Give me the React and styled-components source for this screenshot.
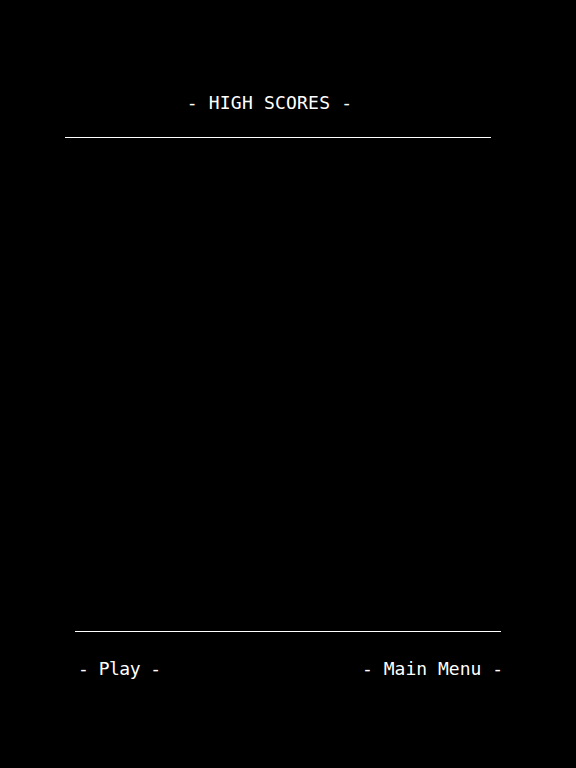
import styled, { createGlobalStyle } from 'styled-components';

const GlobalStyle = createGlobalStyle`
  html, body {
    margin: 0;
    background: #000;
  }
`;

const Screen = styled.main`
  width: 576px;
  height: 768px;
  background: #000;
  color: #fff;
  font-family: 'DejaVu Sans Mono', 'Liberation Mono', monospace;
  display: flex;
  flex-direction: column;
  padding-top: 91px;
  box-sizing: border-box;
`;

const Title = styled.h1`
  margin: 0;
  font-size: 18px;
  font-weight: normal;
  line-height: 24px;
  letter-spacing: 0.2px;
  text-align: center;
  padding-right: 37px;
`;

const Rule = styled.hr`
  border: 0;
  height: 1px;
  background: #fff;
  width: 426px;
  margin: ${(p) => p.$top}px 0 0 ${(p) => p.$left}px;
`;

const Board = styled.section`
  height: 493px;
`;

const Footer = styled.nav`
  display: flex;
  justify-content: space-between;
  margin: 25px 73px 0 78px;
`;

const MenuButton = styled.button`
  background: none;
  border: 0;
  padding: 0;
  color: #fff;
  font: inherit;
  font-size: 18px;
  line-height: 24px;
  letter-spacing: ${(p) => p.$spacing}px;
  cursor: pointer;
`;

const App = () => {
  return (
    <>
      <GlobalStyle />
      <Screen>
        <Title>- HIGH SCORES -</Title>
        <Rule $top={22} $left={65} />
        <Board />
        <Rule $top={0} $left={75} />
        <Footer>
          <MenuButton $spacing={-0.5}>- Play -</MenuButton>
          <MenuButton $spacing={0}>- Main Menu -</MenuButton>
        </Footer>
      </Screen>
    </>
  );
};

export default App;
